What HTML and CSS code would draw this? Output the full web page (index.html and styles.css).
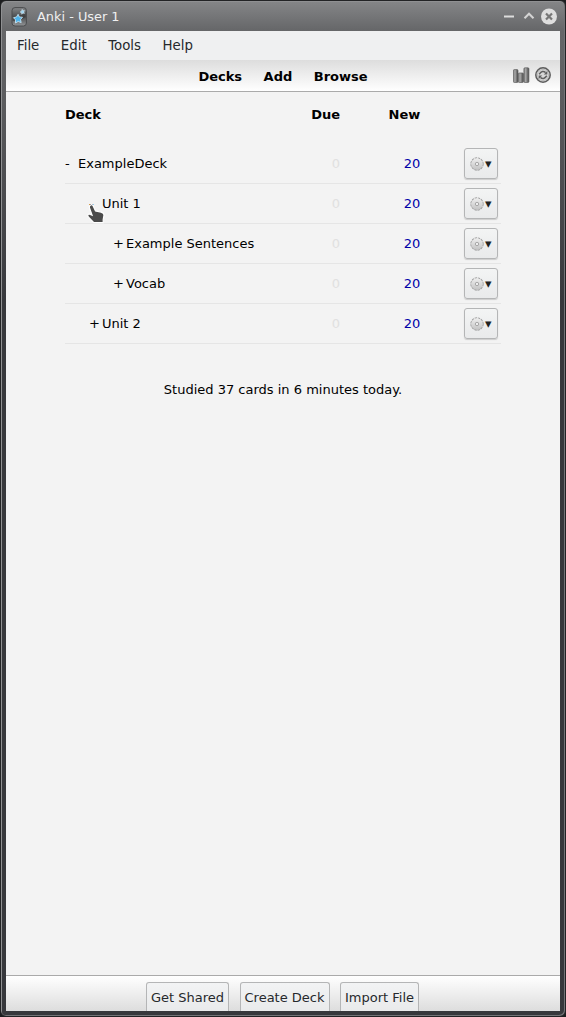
FILE: index.html
```html
<!DOCTYPE html>
<html lang="en">
<head>
<meta charset="utf-8">
<title>Anki - User 1</title>
<link rel="stylesheet" href="styles.css">
</head>
<body>
<svg class="defs" width="0" height="0" aria-hidden="true">
  <defs>
    <linearGradient id="gearFill" x1="0" y1="0" x2="0" y2="1"><stop offset="0" stop-color="#eee"/><stop offset="1" stop-color="#c4c4c4"/></linearGradient>
    <linearGradient id="barFill" x1="0" y1="0" x2="1" y2="0"><stop offset="0" stop-color="#777"/><stop offset=".35" stop-color="#aaa"/><stop offset="1" stop-color="#444"/></linearGradient>
    <linearGradient id="appFill" x1="0" y1="0" x2="0" y2="1"><stop offset="0" stop-color="#858789"/><stop offset=".5" stop-color="#4b4d4f"/><stop offset="1" stop-color="#929496"/></linearGradient>
    <symbol id="gear" viewBox="0 0 14 14">
      <circle cx="7" cy="7" r="6.1" fill="url(#gearFill)" stroke="#9c9c9c" stroke-width="1.1" stroke-dasharray="2.4 .8"/>
      <circle cx="7" cy="7" r="5.7" fill="url(#gearFill)"/>
      <circle cx="7" cy="7" r="1.7" fill="#eee" stroke="#a0a0a0" stroke-width=".9"/>
    </symbol>
  </defs>
</svg>
<div class="window">
  <header class="titlebar">
    <svg class="app-icon" width="16" height="20" viewBox="0 0 16 20">
      <rect x="1" y=".6" width="14.4" height="18.4" rx="3" fill="url(#appFill)" stroke="#4a4c4e"/>
      <path d="M1.8 10Q8 10 14.6 5v5Q10 13 1.8 14z" fill="#333" opacity=".55"/>
      <path d="M7.1 7.3l1.3 2.7 3.1.2-2 2.4.7 3-3-1.1-2.8 1.5.2-3.1-2.2-2.2 3.1-.7z" fill="#4db2ea" stroke="#d3ecf9" stroke-width=".8"/>
      <path d="M11.2 2.4l.7 1.3 1.6-.1-.8 1.4.8 1.4-1.6-.3-1.1 1.2-.3-1.6-1.4-.7 1.4-.7z" fill="#9bd4f1" stroke="#def1fb" stroke-width=".5"/>
    </svg>
    <span class="title">Anki - User 1</span>
    <svg class="controls" width="54" height="18" viewBox="0 0 54 18">
      <path d="M1 8.5h10" stroke="#ddd" stroke-width="2"/>
      <path d="M21.5 10.2l4.5-4.5 4.5 4.5" fill="none" stroke="#d4d4d4" stroke-width="2"/>
      <circle cx="46" cy="8.5" r="8" fill="#dedede"/>
      <path d="M43 5.5l6 6m0-6l-6 6" stroke="#777" stroke-width="2.2"/>
    </svg>
  </header>
  <nav class="menubar"><span>File</span><span>Edit</span><span>Tools</span><span>Help</span></nav>
  <nav class="toolbar">
    <div class="links"><b>Decks</b><b>Add</b><b>Browse</b></div>
    <div class="tools">
      <svg width="17" height="17" viewBox="0 0 17 17" fill="url(#barFill)" stroke="#606060" stroke-width=".7">
        <rect x=".4" y="2.6" width="4.6" height="12.9" rx="1"/><rect x="5.3" y="6" width="5.2" height="9.5" rx="1"/><rect x="10.9" y=".8" width="5" height="14.7" rx="1"/>
      </svg>
      <svg width="17" height="17" viewBox="0 0 17 17" fill="none">
        <circle cx="8" cy="8" r="7.2" fill="#d8d8d8" stroke="#5c5c5c" stroke-width="1.5"/>
        <circle cx="8" cy="8" r="5.6" stroke="#aaa" stroke-width=".6"/>
        <path d="M4.2 7.2Q7.4 2.8 10.6 5.6M11.8 8.8Q8.6 13.2 5.4 10.4" stroke="#606060" stroke-width="1.5"/>
        <path d="M12.3 3.9v3.5H8.8zM3.7 12.1V8.6h3.5z" fill="#606060"/>
      </svg>
    </div>
  </nav>
  <main class="content">
    <div class="decks">
      <div class="row head"><span>Deck</span><span class="num">Due</span><span class="num">New</span></div>
      <div class="row"><span class="deck"><i class="toggle">-</i>ExampleDeck</span><span class="num due">0</span><span class="num new">20</span><button class="options"><svg width="14" height="14"><use href="#gear"/></svg><span>▾</span></button></div>
      <div class="row"><span class="deck level1"><i class="toggle">-</i>Unit 1
        <svg class="cursor" width="20" height="23" viewBox="0 0 20 23"><path d="M4.2 2.2Q6 .8 7.2 3l2.3 5 5.6 1.1Q18 9.8 18 12l-.8 4.5v3.2H7.8L2.3 14Q1 11.8 3 11l3.1 1.2L3.5 5Q3 3 4.2 2.2z" fill="#4b4b4b" stroke="#fff" stroke-width="1.2"/></svg></span><span class="num due">0</span><span class="num new">20</span><button class="options"><svg width="14" height="14"><use href="#gear"/></svg><span>▾</span></button></div>
      <div class="row"><span class="deck level2"><i class="toggle">+</i>Example Sentences</span><span class="num due">0</span><span class="num new">20</span><button class="options"><svg width="14" height="14"><use href="#gear"/></svg><span>▾</span></button></div>
      <div class="row"><span class="deck level2"><i class="toggle">+</i>Vocab</span><span class="num due">0</span><span class="num new">20</span><button class="options"><svg width="14" height="14"><use href="#gear"/></svg><span>▾</span></button></div>
      <div class="row"><span class="deck level1"><i class="toggle">+</i>Unit 2</span><span class="num due">0</span><span class="num new">20</span><button class="options"><svg width="14" height="14"><use href="#gear"/></svg><span>▾</span></button></div>
    </div>
    <p class="studied">Studied 37 cards in 6 minutes today.</p>
  </main>
  <footer class="bottombar"><button>Get Shared</button><button>Create Deck</button><button>Import File</button></footer>
</div>
</body>
</html>
```
FILE: styles.css
```css
* { box-sizing: border-box; }
body {
  margin: 0;
  background: #1c1d1f;
  font: 13px/16px "DejaVu Sans", sans-serif;
  color: #000;
}
.defs { position: absolute; }
.window {
  display: flex;
  flex-direction: column;
  height: 1017px;
  padding: 1px 5px 5px;
  border: 1px solid #222325;
  border-radius: 6px;
  background: linear-gradient(#858688 0, #656668 30px, #626365 60px, #37383c 300px, #37383c 100%);
  box-shadow: inset 1px 1px 0 #8f9092, inset -1px -1px 0 #737477;
}
.titlebar {
  display: flex;
  align-items: center;
  height: 29px;
  flex: none;
  padding: 0 3px 0 5px;
  color: #f0f0f0;
  font-size: 12.9px;
}
.title { margin-left: 10px; }
.controls { margin-left: auto; }
.menubar {
  display: flex;
  flex: none;
  height: 29px;
  padding: 7px 11px 0;
  gap: 21.5px;
  background: #eff0f1;
  color: #26292c;
  font-size: 13.33px;
}
.toolbar {
  display: grid;
  grid-template-columns: 1fr auto 1fr;
  flex: none;
  height: 32px;
  background: linear-gradient(#ddd, #fff);
  border-bottom: 1px solid #aaa;
}
.links {
  grid-column: 2;
  display: flex;
  gap: 21.5px;
  padding-top: 9px;
}
.tools {
  display: flex;
  justify-content: flex-end;
  gap: 5px;
  padding: 7px 8px 0 0;
}
.content {
  flex: 1;
  background: #f3f3f3;
}
.decks {
  width: 436px;
  margin: 0 0 0 59px;
}
.row {
  display: grid;
  grid-template-columns: 195px 80px 80.3px 77.7px;
  align-items: center;
  height: 40px;
  border-bottom: 1px solid #e5e5e5;
}
.row.head {
  height: 52px;
  padding-bottom: 7px;
  border: 0;
  font-weight: bold;
}
.deck { position: relative; white-space: nowrap; }
.level1 { padding-left: 24px; }
.level2 { padding-left: 48px; }
.toggle { display: inline-block; width: 13px; font-style: normal; }
.num { text-align: right; }
.due { color: #e0e0e0; }
.new { color: #0000a8; }
.options {
  display: flex;
  align-items: center;
  gap: 1px;
  width: 34px;
  height: 31px;
  margin-left: auto;
  padding: 0 0 0 5px;
  border: 1px solid #b4b5b6;
  border-radius: 3px;
  background: linear-gradient(#f3f4f4, #e9eaeb);
  box-shadow: 0 1px 1px #ccc;
  font: 13px "DejaVu Sans", sans-serif;
  color: #222;
}
.cursor { position: absolute; left: 21px; top: 7px; }
.studied { margin: 38px 0 0; text-align: center; }
.bottombar {
  display: flex;
  flex: none;
  justify-content: center;
  gap: 10.5px;
  height: 36px;
  padding: 6px 1px 0 0;
  overflow: hidden;
  border-top: 1px solid #aaa;
  background: linear-gradient(#fff, #ddd);
}
.bottombar button {
  height: 30px;
  padding: 0 4px;
  border: 1px solid #b4b5b6;
  border-bottom: 0;
  border-radius: 3px 3px 0 0;
  background: linear-gradient(#f2f3f4, #e9eaeb);
  color: #26292c;
  font: 13px "DejaVu Sans", sans-serif;
}
```
